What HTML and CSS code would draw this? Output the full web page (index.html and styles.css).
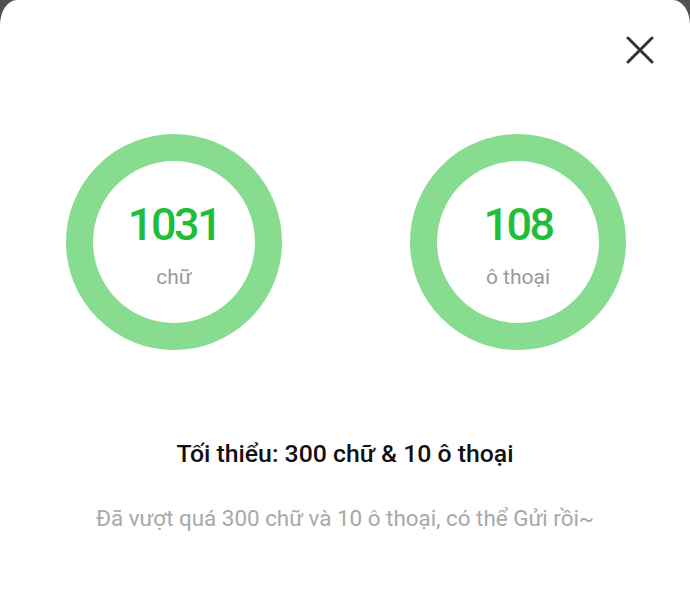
FILE: index.html
```html
<!DOCTYPE html>
<html lang="vi">
<head>
<meta charset="utf-8">
<link rel="stylesheet" href="styles.css">
</head>
<body>
<div class="card">
  <div class="header">
    <button class="close" aria-label="Đóng">
      <svg width="28" height="28" viewBox="0 0 28 28"><path d="M2 2 L26 26 M26 2 L2 26" stroke="#333" stroke-width="3" stroke-linecap="round" fill="none"/></svg>
    </button>
  </div>
  <div class="rings">
    <div class="ring">
      <div class="num">1031</div>
      <div class="label">chữ</div>
    </div>
    <div class="ring">
      <div class="num">108</div>
      <div class="label">ô thoại</div>
    </div>
  </div>
  <div class="title">Tối thiểu: 300 chữ &amp; 10 ô thoại</div>
  <div class="sub">Đã vượt quá 300 chữ và 10 ô thoại, có thể Gửi rồi~</div>
</div>
</body>
</html>
```
FILE: styles.css
```css
html, body {
  margin: 0;
  padding: 0;
  background: #505050;
  height: 100%;
  overflow: hidden;
}
.card {
  background: #fff;
  height: 600px;
  border-radius: 17px 17px 0 0 / 25px 25px 0 0;
  font-family: Roboto, "Noto Sans", sans-serif;
  display: flex;
  flex-direction: column;
  padding-top: 36px;
  box-sizing: border-box;
}
.header {
  display: flex;
  justify-content: flex-end;
  padding-right: 36px;
}
.close {
  width: 28px;
  height: 28px;
  padding: 0;
  border: 0;
  background: none;
  display: block;
}
.close svg { display: block; }
.rings {
  display: flex;
  justify-content: space-between;
  padding: 0 64px 0 66px;
  margin-top: 70px;
}
.ring {
  width: 216px;
  height: 216px;
  box-sizing: border-box;
  border: 27px solid #88dc8f;
  border-radius: 50%;
  display: flex;
  flex-direction: column;
  align-items: center;
  justify-content: center;
  padding-top: 6px;
}
.num {
  font-size: 45px;
  line-height: 45px;
  font-weight: 500;
  letter-spacing: -2.5px;
  color: #1fbe3a;
}
.label {
  margin-top: 20px;
  font-size: 21px;
  line-height: 21px;
  color: #9a9a9a;
}
.title {
  margin-top: 90px;
  text-align: center;
  font-size: 24.8px;
  line-height: 28px;
  font-weight: 500;
  color: #111;
}
.sub {
  margin-top: 37px;
  text-align: center;
  font-size: 22.4px;
  line-height: 26px;
  color: #a8a8a8;
}
```
